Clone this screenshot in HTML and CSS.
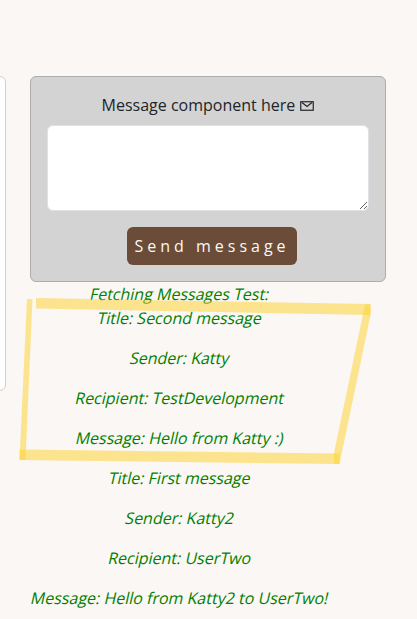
FILE: index.html
```html
<!DOCTYPE html>
<html lang="en">
<head>
<meta charset="utf-8">
<title>Messages</title>
<link rel="stylesheet" href="styles.css">
</head>
<body>
<div class="page">
  <aside class="side-panel"></aside>
  <main class="column">
    <section class="card">
      <div class="label">Message component here
        <svg class="mail" viewBox="0 0 14 10" width="14" height="10"><rect x=".75" y=".75" width="12.5" height="8.5"/><path d="M2 1.500l5 4 5-4"/></svg>
      </div>
      <textarea class="input"></textarea>
      <button class="send">Send message</button>
    </section>
    <div class="messages">
      <div class="heading">Fetching Messages Test:</div>
      <p class="line">Title: Second message</p>
      <p class="line">Sender: Katty</p>
      <p class="line">Recipient: TestDevelopment</p>
      <p class="line">Message: Hello from Katty :)</p>
      <p class="line">Title: First message</p>
      <p class="line">Sender: Katty2</p>
      <p class="line">Recipient: UserTwo</p>
      <p class="line">Message: Hello from Katty2 to UserTwo!</p>
    </div>
  </main>
  <svg class="marker" viewBox="0 0 417 619" width="417" height="619">
    <path d="M36 298L370.500 304V315L36 308.500Z"/>
    <path d="M27 299H32.500L25.500 460H19.500Z"/>
    <path d="M19.500 449.500L339.500 453.500V464L19.500 460Z"/>
    <path d="M365 304.500H370.500V315L339.500 464H334V453Z"/>
  </svg>
</div>
</body>
</html>
```

FILE: styles.css
```css
* { box-sizing: border-box; }
body {
  margin: 0;
  background: #fbf7f4;
  color: #212529;
  font: 16px/24px "Open Sans", sans-serif;
}
.page {
  position: relative;
  display: flex;
  align-items: flex-start;
  gap: 24px;
  width: 417px;
  height: 619px;
  padding-top: 76px;
  overflow: hidden;
}
.side-panel {
  flex: none;
  width: 26px;
  height: 315px;
  margin-left: -20px;
  background: #fff;
  border: 1px solid #ced0d2;
  border-radius: 6px;
}
.column { flex: none; width: 356px; }
.card {
  display: flex;
  flex-direction: column;
  align-items: center;
  height: 206px;
  padding: 16px;
  background: #d3d3d3;
  border: 1px solid #adadad;
  border-radius: 6px;
}
.label { height: 24px; }
.mail {
  margin-left: 1px;
  fill: none;
  stroke: #212529;
  stroke-width: 1.2;
}
.input {
  display: block;
  width: 322px;
  height: 86px;
  margin: 8px 0 16px;
  background: #fff;
  border: 1px solid #dee2e6;
  border-radius: 6px;
  outline: none;
}
.send {
  width: 170px;
  height: 38px;
  margin-left: 8px;
  padding: 0;
  background: #6b4c38;
  color: #fbf7f4;
  border: 0;
  border-radius: 6px;
  font: 16px/24px "Open Sans", sans-serif;
  letter-spacing: 4px;
}
.messages {
  width: 300px;
  color: green;
  text-align: center;
  white-space: nowrap;
}
.heading, .line { transform: skewX(-13deg); }
.line { margin: 0 0 16px; }
.marker {
  position: absolute;
  top: 0;
  left: 0;
  fill: #fdd12a;
  fill-opacity: .5;
  pointer-events: none;
}
```
